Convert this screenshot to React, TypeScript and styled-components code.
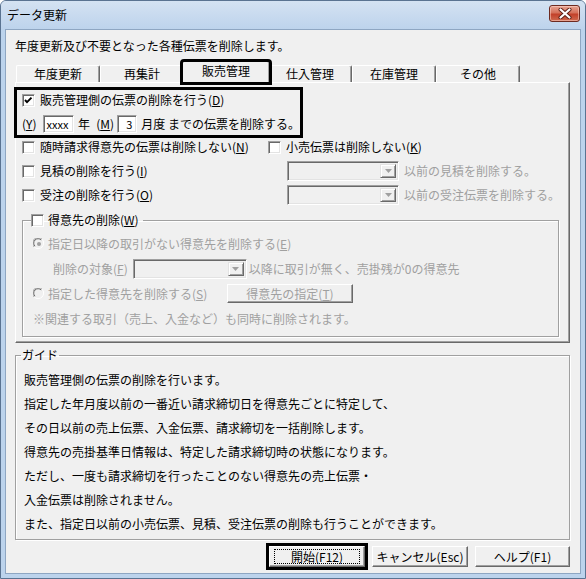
import React from 'react'
import styled, { createGlobalStyle } from 'styled-components'

const GlobalStyle = createGlobalStyle`
  html, body {
    margin: 0;
    padding: 0;
    background: #fff;
  }
  body {
    font-family: "Noto Sans CJK JP", "Noto Sans", sans-serif;
    font-size: 12px;
    line-height: 16px;
    color: #000;
  }
  * {
    box-sizing: border-box;
  }
`

const Window = styled.div`
    width: 586px;
    height: 579px;
    display: flex;
    flex-direction: column;
    background: #bcd3ec;
    border: 1px solid #5a7391;
    border-radius: 6px 6px 0 0;
    padding: 0 4px 4px;
`
const TitleBar = styled.div`
    flex: none;
    height: 28px;
    margin: 0 -4px;
    padding: 0 5px 0 6px;
    display: flex;
    justify-content: space-between;
    align-items: flex-start;
    background: linear-gradient(#d4e2f2, #bdd3ec);
    border-radius: 5px 5px 0 0;
`
const Title = styled.span`
    margin-top: 6px;
    font-size: 12px;
    line-height: 16px;
`
const CloseButton = styled.div`
    margin-top: 4px;
    width: 31px;
    height: 17px;
    display: flex;
    align-items: center;
    justify-content: center;
    border: 1px solid #6d2a20;
    border-radius: 3px;
    background: linear-gradient(#e7a393, #d5715a 45%, #c2412a 55%, #cf6a4f);
    box-shadow: inset 0 0 0 1px rgba(255, 220, 210, 0.5);
`
const Client = styled.div`
    flex: 1;
    display: flex;
    flex-direction: column;
    align-items: flex-start;
    background: #f0f0f0;
    border: 1px solid #8ea6c2;
    padding: 8px 0 0 9px;
`
const Intro = styled.div`
    height: 16px;
`
const TabStrip = styled.div`
    margin-top: 5px;
    height: 23px;
    display: flex;
    align-items: flex-end;
    padding-left: 1px;
`
const Tab = styled.div<{ $active?: boolean }>`
    position: relative;
    z-index: ${p => (p.$active ? 2 : 1)};
    width: ${p => (p.$active ? 88 : 84)}px;
    height: ${p => (p.$active ? 22 : 17)}px;
    margin: 0 ${p => (p.$active ? -2 : 0)}px ${p => (p.$active ? -1 : 0)}px;
    display: flex;
    align-items: center;
    justify-content: center;
    background: #f0f0f0;
    border-top: 1px solid #fff;
    border-left: 1px solid #fff;
    border-right: 1px solid #696969;
    border-radius: 2px 2px 0 0;
    box-shadow: inset -1px 0 #a0a0a0;
    padding-bottom: ${p => (p.$active ? 3 : 0)}px;
    outline: ${p => (p.$active ? '3px solid #000' : 'none')};
    outline-offset: -1px;
`
const Panel = styled.div`
    width: 555px;
    height: 261px;
    display: flex;
    flex-direction: column;
    align-items: flex-start;
    border-top: 1px solid #fff;
    border-left: 1px solid #fff;
    border-right: 1px solid #696969;
    border-bottom: 1px solid #696969;
    box-shadow: inset -1px -1px #a0a0a0;
`
const Highlight = styled.div`
    margin: 4px 0 0 -2px;
    width: 289px;
    height: 51px;
    border: 3px solid #000;
    padding-left: 5px;
    display: flex;
    flex-direction: column;
    gap: 4px;
`
const Line = styled.div<{ $h?: number; $indent?: number }>`
    height: ${p => p.$h ?? 20}px;
    padding-left: ${p => p.$indent ?? 0}px;
    display: flex;
    align-items: center;
    white-space: nowrap;
`
const Rows = styled.div`
    margin-top: -3px;
    display: flex;
    flex-direction: column;
`
const Cell = styled.div<{ $w?: number }>`
    width: ${p => (p.$w ? `${p.$w}px` : 'auto')};
    flex: none;
    display: flex;
    align-items: center;
    gap: 5px;
`
const Text = styled.span<{ $disabled?: boolean; $ml?: number }>`
    color: ${p => (p.$disabled ? '#a0a0a0' : '#000')};
    margin-left: ${p => p.$ml ?? 0}px;
`
const Key = styled.span`
    text-decoration: underline;
    text-underline-offset: 1px;
`
const CheckBox = styled.span`
    flex: none;
    width: 13px;
    height: 13px;
    display: flex;
    background: #fff;
    border: 1px solid;
    border-color: #a0a0a0 #fff #fff #a0a0a0;
    box-shadow: inset 1px 1px #696969, inset -1px -1px #e3e3e3;
`
const TextBox = styled.span<{ $w: number; $right?: boolean; $ml?: number }>`
    width: ${p => p.$w}px;
    height: 18px;
    margin-left: ${p => p.$ml ?? 0}px;
    display: flex;
    align-items: center;
    justify-content: ${p => (p.$right ? 'flex-end' : 'flex-start')};
    padding: 0 4px 0 3px;
    background: #fff;
    border: 1px solid;
    border-color: #a0a0a0 #fff #fff #a0a0a0;
    box-shadow: inset 1px 1px #696969, inset -1px -1px #e3e3e3;
    font-size: 11px;
`
const Combo = styled.span<{ $w: number; $ml?: number }>`
    flex: none;
    width: ${p => p.$w}px;
    height: 20px;
    margin-left: ${p => p.$ml ?? 0}px;
    display: flex;
    justify-content: flex-end;
    align-items: center;
    padding: 2px;
    background: #f0f0f0;
    border: 1px solid;
    border-color: #a0a0a0 #fff #fff #a0a0a0;
    box-shadow: inset 1px 1px #696969, inset -1px -1px #e3e3e3;
`
const ComboArrow = styled.span`
    width: 16px;
    height: 14px;
    display: flex;
    align-items: center;
    justify-content: center;
    background: #f0f0f0;
    border: 1px solid;
    border-color: #e3e3e3 #696969 #696969 #e3e3e3;
    box-shadow: inset 1px 1px #fff, inset -1px -1px #a0a0a0;
`
const Group = styled.fieldset<{ $w: number; $h: number; $pl: number; $pt: number }>`
    width: ${p => p.$w}px;
    height: ${p => p.$h}px;
    min-width: 0;
    margin: 0;
    padding: ${p => p.$pt}px 0 0 ${p => p.$pl}px;
    border: 1px solid #a0a0a0;
    box-shadow: 1px 1px #fff, inset 1px 1px #fff;
    display: flex;
    flex-direction: column;
`
const OptionGroup = styled(Group)`
    margin: 5px 0 0 6px;
`
const GuideGroup = styled(Group)`
    margin-top: 4px;
`
const Legend = styled.legend<{ $ml: number; $pl?: number; $pr?: number }>`
    margin-left: ${p => p.$ml}px;
    padding: 0 ${p => p.$pr ?? 1}px 0 ${p => p.$pl ?? 1}px;
    height: 16px;
    line-height: 16px;
`
const LegendInner = styled.span`
    display: inline-flex;
    align-items: center;
    gap: 4px;
    height: 16px;
    vertical-align: top;
`
const Radio = styled.svg`
    flex: none;
    width: 12px;
    height: 12px;
`
const RadioCell = styled(Cell)`
    gap: 3px;
`
const SmallButton = styled.span`
    width: 126px;
    height: 19px;
    display: flex;
    align-items: center;
    justify-content: center;
    color: #a0a0a0;
    background: #f0f0f0;
    border: 1px solid;
    border-color: #fff #696969 #696969 #fff;
    box-shadow: inset -1px -1px #a0a0a0;
`
const GuideLine = styled.div`
    height: 24px;
    display: flex;
    align-items: center;
    white-space: nowrap;
`
const ButtonRow = styled.div`
    margin-top: 6px;
    width: 555px;
    display: flex;
    justify-content: flex-end;
    gap: 7px;
`
const Button = styled.div<{ $w: number; $default?: boolean }>`
    width: ${p => p.$w}px;
    height: 21px;
    display: flex;
    align-items: center;
    justify-content: center;
    background: #f0f0f0;
    border: 1px solid;
    border-color: #fff #696969 #696969 #fff;
    box-shadow: inset -1px -1px #a0a0a0;
    outline: ${p => (p.$default ? '3px solid #000' : 'none')};
    outline-offset: 0;
`
const FocusRing = styled.span`
    width: calc(100% - 8px);
    height: 15px;
    display: flex;
    align-items: center;
    justify-content: center;
    border: 1px dotted #000;
`

const Check = ({ checked }: { checked?: boolean }) => (
  <CheckBox>
    {checked && (
      <svg width="11" height="11" viewBox="0 0 11 11">
        <polyline points="2,5 4,7.2 8.5,2.6" fill="none" stroke="#000" strokeWidth="1.9" />
      </svg>
    )}
  </CheckBox>
)

const RadioDot = ({ checked }: { checked?: boolean }) => (
  <Radio viewBox="0 0 12 12">
    <circle cx="6" cy="6" r="5.5" fill="#f0f0f0" />
    <path d="M1.2 9 A5.3 5.3 0 0 1 9 1.2" fill="none" stroke="#a0a0a0" strokeWidth="1" />
    <path d="M2 8.2 A4.3 4.3 0 0 1 8.2 2" fill="none" stroke="#696969" strokeWidth="1" />
    <path d="M9 1.2 A5.3 5.3 0 0 1 1.2 9" fill="none" stroke="#fff" strokeWidth="1" />
    {checked && <circle cx="6" cy="6" r="2" fill="#a0a0a0" />}
  </Radio>
)

const Arrow = () => (
  <ComboArrow>
    <svg width="7" height="4" viewBox="0 0 7 4">
      <polygon points="0,0 7,0 3.5,4" fill="#a0a0a0" />
    </svg>
  </ComboArrow>
)

const tabs = ['年度更新', '再集計', '販売管理', '仕入管理', '在庫管理', 'その他']

const guide = [
  '販売管理側の伝票の削除を行います。',
  '指定した年月度以前の一番近い請求締切日を得意先ごとに特定して、',
  'その日以前の売上伝票、入金伝票、請求締切を一括削除します。',
  '得意先の売掛基準日情報は、特定した請求締切時の状態になります。',
  'ただし、一度も請求締切を行ったことのない得意先の売上伝票・',
  '入金伝票は削除されません。',
  'また、指定日以前の小売伝票、見積、受注伝票の削除も行うことができます。',
]

const App = () => {
  return (
    <>
      <GlobalStyle />
      <Window>
        <TitleBar>
          <Title>データ更新</Title>
          <CloseButton>
            <svg width="14" height="11" viewBox="0 0 14 11">
              <path d="M2.5 1.5 L11.5 9.5 M11.5 1.5 L2.5 9.5" stroke="#5a1d14" strokeWidth="4" strokeLinecap="round" />
              <path d="M2.5 1.5 L11.5 9.5 M11.5 1.5 L2.5 9.5" stroke="#fff" strokeWidth="2.2" strokeLinecap="round" />
            </svg>
          </CloseButton>
        </TitleBar>
        <Client>
          <Intro>年度更新及び不要となった各種伝票を削除します。</Intro>
          <TabStrip>
            {tabs.map((t, i) => (
              <Tab key={t} $active={i === 2}>{t}</Tab>
            ))}
          </TabStrip>
          <Panel>
            <Highlight>
              <Line>
                <Cell>
                  <Check checked />
                  <Text>販売管理側の伝票の削除を行う(<Key>D</Key>)</Text>
                </Cell>
              </Line>
              <Line>
                <Text>(<Key>Y</Key>)</Text>
                <TextBox $w={33} $ml={6}>xxxx</TextBox>
                <Text $ml={4}>年</Text>
                <Text $ml={6}>(<Key>M</Key>)</Text>
                <TextBox $w={21} $ml={3} $right>3</TextBox>
                <Text $ml={4}>月度 までの伝票を削除する。</Text>
              </Line>
            </Highlight>
            <Rows>
              <Line $h={24} $indent={6}>
                <Cell $w={246}>
                  <Check />
                  <Text>随時請求得意先の伝票は削除しない(<Key>N</Key>)</Text>
                </Cell>
                <Cell>
                  <Check />
                  <Text>小売伝票は削除しない(<Key>K</Key>)</Text>
                </Cell>
              </Line>
              <Line $h={24} $indent={6}>
                <Cell $w={265}>
                  <Check />
                  <Text>見積の削除を行う(<Key>I</Key>)</Text>
                </Cell>
                <Combo $w={112}><Arrow /></Combo>
                <Text $disabled $ml={5}>以前の見積を削除する。</Text>
              </Line>
              <Line $h={24} $indent={6}>
                <Cell $w={265}>
                  <Check />
                  <Text>受注の削除を行う(<Key>O</Key>)</Text>
                </Cell>
                <Combo $w={112}><Arrow /></Combo>
                <Text $disabled $ml={5}>以前の受注伝票を削除する。</Text>
              </Line>
            </Rows>
            <OptionGroup $w={537} $h={125} $pl={10} $pt={3}>
              <Legend $ml={-2} $pl={0} $pr={4}>
                <LegendInner>
                  <Check />
                  <Text>得意先の削除(<Key>W</Key>)</Text>
                </LegendInner>
              </Legend>
              <Line $h={25}>
                <RadioCell>
                  <RadioDot checked />
                  <Text $disabled>指定日以降の取引がない得意先を削除する(<Key>E</Key>)</Text>
                </RadioCell>
              </Line>
              <Line $h={25} $indent={20}>
                <Text $disabled>削除の対象(<Key>F</Key>)</Text>
                <Combo $w={114} $ml={5}><Arrow /></Combo>
                <Text $disabled $ml={2}>以降に取引が無く、売掛残が0の得意先</Text>
              </Line>
              <Line $h={25}>
                <RadioCell $w={194}>
                  <RadioDot />
                  <Text $disabled>指定した得意先を削除する(<Key>S</Key>)</Text>
                </RadioCell>
                <SmallButton>得意先の指定(<Key>T</Key>)</SmallButton>
              </Line>
              <Line $h={25}>
                <Text $disabled>※関連する取引（売上、入金など）も同時に削除されます。</Text>
              </Line>
            </OptionGroup>
          </Panel>
          <GuideGroup $w={555} $h={193} $pl={8} $pt={5}>
            <Legend $ml={-3}>ガイド</Legend>
            {guide.map(g => (
              <GuideLine key={g}>{g}</GuideLine>
            ))}
          </GuideGroup>
          <ButtonRow>
            <Button $w={96} $default>
              <FocusRing>開始(F12)</FocusRing>
            </Button>
            <Button $w={96}>キャンセル(Esc)</Button>
            <Button $w={95}>ヘルプ(F1)</Button>
          </ButtonRow>
        </Client>
      </Window>
    </>
  )
}

export default App
